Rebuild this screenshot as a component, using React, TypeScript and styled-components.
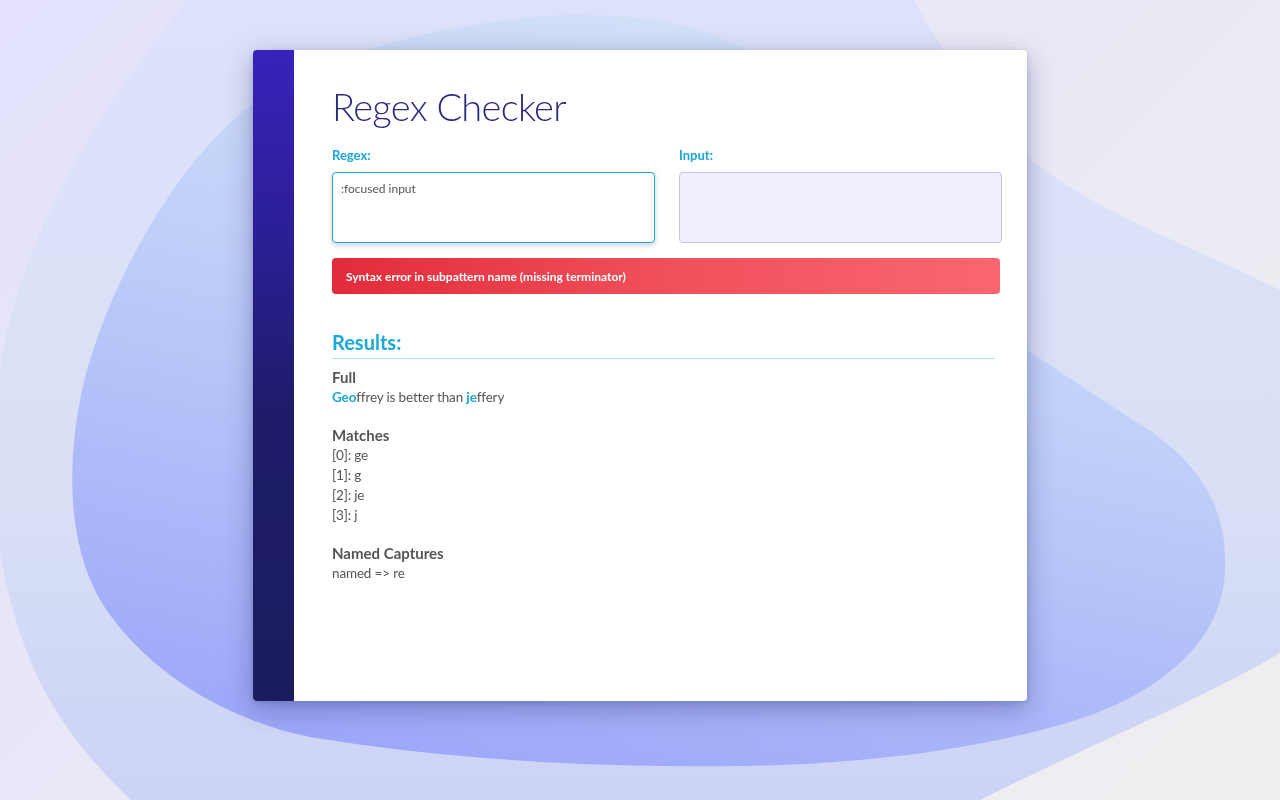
import React from "react";
import styled, { createGlobalStyle } from "styled-components";

const GlobalStyle = createGlobalStyle`
  html, body { margin: 0; padding: 0; }
  body {
    width: 1280px;
    height: 800px;
    overflow: hidden;
    background: linear-gradient(135deg, #e4e2fd 0%, #e9e9f6 50%, #efeff0 100%);
    font-family: Lato, "Noto Sans", sans-serif;
  }
`;

const Backdrop = styled.svg`
  position: fixed;
  inset: 0;
  width: 1280px;
  height: 800px;
  z-index: 0;
`;

const Page = styled.div`
  position: relative;
  z-index: 1;
  display: flex;
  justify-content: flex-start;
  padding: 50px 0 0 253px;
  box-sizing: border-box;
  height: 800px;
`;

const Card = styled.main`
  width: 774px;
  height: 651px;
  display: flex;
  background: #ffffff;
  border-radius: 4px;
  overflow: hidden;
  box-shadow: 0 8px 28px rgba(40, 40, 110, 0.35), 0 2px 6px rgba(40, 40, 110, 0.15);
`;

const SideBar = styled.aside`
  width: 41px;
  flex: none;
  background: linear-gradient(180deg, #3822bb 0%, #2a1f93 30%, #1e1c6a 55%, #1b1c5e 100%);
`;

const Content = styled.section`
  flex: 1;
  padding: 28px 25px 0 38px;
  display: flex;
  flex-direction: column;
`;

const Title = styled.h1`
  margin: 0;
  font-family: Lato, sans-serif;
  font-weight: 300;
  font-size: 38px;
  line-height: 56px;
  color: #2d2a7e;
  letter-spacing: -0.7px;
`;

const Fields = styled.div`
  display: grid;
  grid-template-columns: 1fr 1fr;
  column-gap: 24px;
  margin-top: 12px;
`;

const Field = styled.div`
  display: flex;
  flex-direction: column;
`;

const Label = styled.label`
  font-size: 13px;
  font-weight: 700;
  color: #1aa7d9;
  line-height: 18px;
  margin-bottom: 8px;
`;

const TextBox = styled.div<{ $focused?: boolean }>`
  box-sizing: border-box;
  height: 71px;
  border-radius: 4px;
  padding: 9px 8px;
  font-size: 12px;
  line-height: 14px;
  color: #555;
  border: 1px solid ${(p) => (p.$focused ? "#1aa7d9" : "#c6c3ea")};
  background: ${(p) => (p.$focused ? "#ffffff" : "#f0f0fc")};
  box-shadow: ${(p) => (p.$focused ? "0 2px 5px rgba(60, 60, 120, 0.25)" : "none")};
`;

const ErrorBar = styled.div`
  margin-top: 15px;
  width: 668px;
  height: 36px;
  box-sizing: border-box;
  border-radius: 4px;
  padding: 0 14px;
  display: flex;
  align-items: center;
  background: linear-gradient(90deg, #e32b3a 0%, #f0505a 50%, #fa6670 100%);
  color: #ffffff;
  font-size: 12px;
  font-weight: 700;
`;

const ResultsHeading = styled.h2`
  margin: 34px 0 0;
  width: 663px;
  font-size: 20px;
  font-weight: 700;
  line-height: 28px;
  color: #1aa7d9;
  padding-bottom: 2px;
  border-bottom: 1px solid #aee6f4;
`;

const Group = styled.div`
  margin-top: 8px;
  margin-bottom: 10px;
`;

const GroupTitle = styled.h3`
  margin: 0;
  font-size: 15px;
  font-weight: 700;
  line-height: 20px;
  color: #555;
`;

const Line = styled.div`
  font-size: 13.5px;
  letter-spacing: -0.15px;
  line-height: 20px;
  color: #555;
`;

const Hit = styled.span`
  color: #1aa7d9;
  font-weight: 700;
`;

export default function App() {
  return (
    <>
      <GlobalStyle />
      <Backdrop viewBox="0 0 1280 800" preserveAspectRatio="none">
        <defs>
          <linearGradient id="outer" x1="0.5" y1="0" x2="0.5" y2="1">
            <stop offset="0" stopColor="#dde2fa" />
            <stop offset="0.6" stopColor="#d9e0f5" />
            <stop offset="1" stopColor="#ccd3f6" />
          </linearGradient>
          <linearGradient id="inner" x1="0.7" y1="0" x2="0.35" y2="1">
            <stop offset="0" stopColor="#d3e3f7" />
            <stop offset="0.45" stopColor="#c0cff8" />
            <stop offset="1" stopColor="#9ea8f9" />
          </linearGradient>
        </defs>
        <path
          fill="url(#outer)"
          d="M188 0 C120 80 40 200 10 320 C-20 440 -10 560 30 660 C60 730 100 770 131 800 L980 800 C1100 740 1200 700 1280 653 L1280 290 C1180 240 1060 200 1000 130 C960 80 930 30 914 0 Z"
        />
        <path
          fill="url(#inner)"
          d="M563 15 C400 25 300 70 245 110 C170 170 100 300 80 400 C65 480 70 560 110 615 C150 670 220 718 310 737 C450 760 600 768 740 766 C880 764 980 747 1060 725 C1150 700 1215 650 1224 583 C1232 510 1200 460 1133 420 C1080 385 1050 365 1027 350 C950 300 880 220 830 130 C780 50 700 12 563 15 Z"
        />
      </Backdrop>
      <Page>
        <Card>
          <SideBar />
          <Content>
            <Title>Regex Checker</Title>
            <Fields>
              <Field>
                <Label>Regex:</Label>
                <TextBox $focused>:focused input</TextBox>
              </Field>
              <Field>
                <Label>Input:</Label>
                <TextBox />
              </Field>
            </Fields>
            <ErrorBar>Syntax error in subpattern name (missing terminator)</ErrorBar>
            <ResultsHeading>Results:</ResultsHeading>
            <Group>
              <GroupTitle>Full</GroupTitle>
              <Line>
                <Hit>Geo</Hit>ffrey is better than <Hit>je</Hit>ffery
              </Line>
            </Group>
            <Group>
              <GroupTitle>Matches</GroupTitle>
              <Line>[0]: ge</Line>
              <Line>[1]: g</Line>
              <Line>[2]: je</Line>
              <Line>[3]: j</Line>
            </Group>
            <Group>
              <GroupTitle>Named Captures</GroupTitle>
              <Line>named =&gt; re</Line>
            </Group>
          </Content>
        </Card>
      </Page>
    </>
  );
}
